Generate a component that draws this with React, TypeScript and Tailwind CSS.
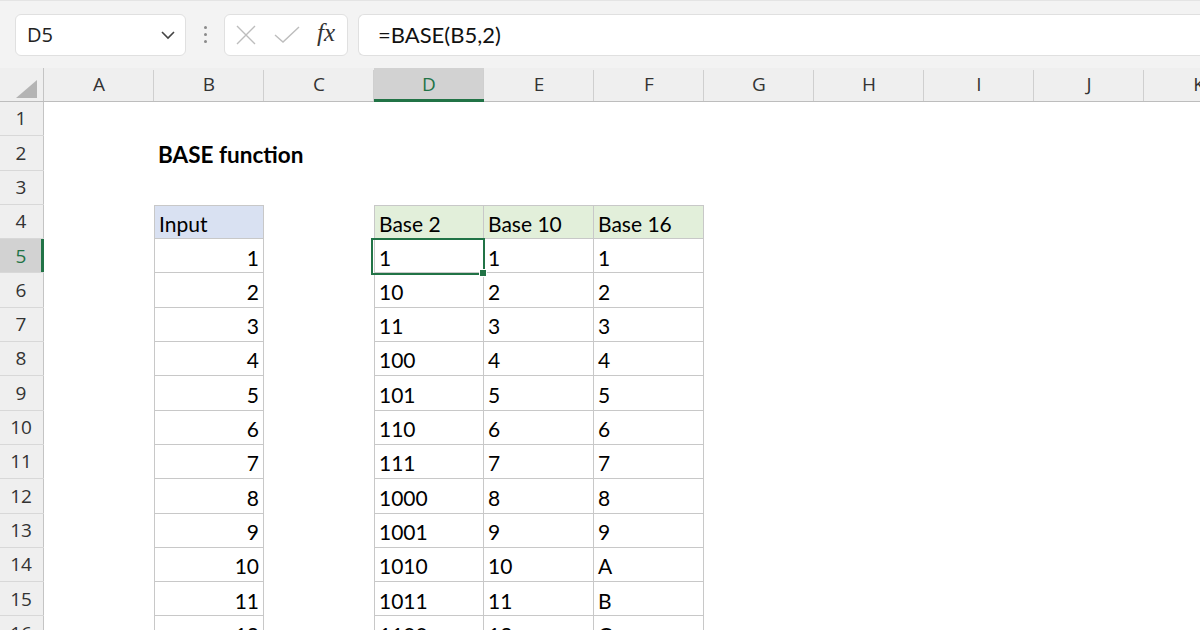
import React from "react";

const cols = ["A", "B", "C", "D", "E", "F", "G", "H", "I", "J", "K"];
const base2 = ["1", "10", "11", "100", "101", "110", "111", "1000", "1001", "1010", "1011", "1100"];
const base16 = ["1", "2", "3", "4", "5", "6", "7", "8", "9", "A", "B", "C"];

const cellFont = { fontFamily: "Lato, 'Open Sans', sans-serif" };
const cellBase = "w-[110px] shrink-0 h-full flex items-center px-[4px] pt-[3px] text-[21px] text-black ";

function RowHeader({ n, selected }: { n: number; selected?: boolean }) {
  return (
    <div
      className={
        "w-[44px] shrink-0 h-full flex items-center justify-center border-b border-[#d8d8d8] text-[19px] relative " +
        (selected ? "bg-[#d2d2d2] text-[#217346]" : "bg-[#efefef] text-[#333]")
      }
      style={{ fontFamily: "'Open Sans', 'Noto Sans', sans-serif" }}
    >
      <span className="-ml-[2px]">{n}</span>
      <div className={"absolute right-0 top-0 bottom-0 " + (selected ? "w-[3px] bg-[#217346]" : "w-[1px] bg-[#c4c4c4]")} />
    </div>
  );
}

export default function App() {
  const rows: React.ReactNode[] = [];
  for (let r = 1; r <= 16; r++) {
    const i = r - 5;
    let b: React.ReactNode = null;
    let d: React.ReactNode = null;
    let e: React.ReactNode = null;
    let f: React.ReactNode = null;
    let bordered = false;
    let bBg = "";
    let tBg = "";
    if (r === 4) {
      b = "Input";
      d = "Base 2";
      e = "Base 10";
      f = "Base 16";
      bordered = true;
      bBg = "bg-[#d9e1f2]";
      tBg = "bg-[#e2efda]";
    } else if (r >= 5) {
      b = String(i + 1);
      d = base2[i];
      e = String(i + 1);
      f = base16[i];
      bordered = true;
    }
    const top = r === 4 ? "border-t " : "";
    rows.push(
      <div key={r} className="flex h-[34.3px]">
        <RowHeader n={r} selected={r === 5} />
        <div className={cellBase} style={cellFont} />
        {r === 2 ? (
          <div
            className="w-[110px] shrink-0 h-full flex items-center px-[4px] pt-[3px] text-[22.5px] font-bold text-black whitespace-nowrap"
            style={cellFont}
          >
            BASE function
          </div>
        ) : (
          <div
            className={
              cellBase +
              (bordered ? "border-l border-r border-b border-[#c8c8c8] " : "") +
              top +
              (r === 4 ? "justify-start " : "justify-end ") +
              bBg
            }
            style={cellFont}
          >
            {b}
          </div>
        )}
        <div className={cellBase} style={cellFont} />
        <div
          className={cellBase + (bordered ? "border-l border-r border-b border-[#c8c8c8] " : "") + top + tBg}
          style={cellFont}
        >
          {d}
        </div>
        <div className={cellBase + (bordered ? "border-r border-b border-[#c8c8c8] " : "") + top + tBg} style={cellFont}>
          {e}
        </div>
        <div className={cellBase + (bordered ? "border-r border-b border-[#c8c8c8] " : "") + top + tBg} style={cellFont}>
          {f}
        </div>
      </div>
    );
  }

  return (
    <div
      className="w-[1200px] h-[630px] overflow-hidden bg-white relative"
      style={{ fontFamily: "'Open Sans', 'Noto Sans', sans-serif" }}
    >
      {/* toolbar */}
      <div className="h-[68px] bg-[#f3f3f3] flex items-center border-t border-[#e4e4e4]">
        <div className="ml-[15px] w-[171px] h-[42px] bg-white rounded-[6px] border border-[#e0e0e0] flex items-center justify-between pl-[11px] pr-[9px]">
          <span className="text-[20px] text-[#222]">D5</span>
          <svg width="16" height="10" viewBox="0 0 16 10">
            <path d="M2 2 L8 8 L14 2" fill="none" stroke="#444" strokeWidth="1.6" />
          </svg>
        </div>
        <div className="w-[38px] flex flex-col items-center gap-[4px]">
          <div className="w-[3px] h-[3px] rounded-full bg-[#8a8a8a]" />
          <div className="w-[3px] h-[3px] rounded-full bg-[#8a8a8a]" />
          <div className="w-[3px] h-[3px] rounded-full bg-[#8a8a8a]" />
        </div>
        <div className="w-[124px] h-[42px] bg-white rounded-[6px] border border-[#e0e0e0] flex items-center pl-[10px]">
          <svg width="22" height="22" viewBox="0 0 22 22">
            <path d="M2 2 L20 20 M20 2 L2 20" stroke="#bdbdbd" strokeWidth="1.4" fill="none" />
          </svg>
          <svg width="28" height="22" viewBox="0 0 28 22" className="ml-[16px]">
            <path d="M2 11 L10 18 L26 3" stroke="#bdbdbd" strokeWidth="1.4" fill="none" />
          </svg>
          <span
            className="ml-[16px] text-[25px] italic text-[#333] leading-none -mt-[4px]"
            style={{ fontFamily: "'Liberation Serif', 'DejaVu Serif', serif" }}
          >
            fx
          </span>
        </div>
        <div className="ml-[10px] flex-1 h-[42px] bg-white rounded-l-[6px] border border-r-0 border-[#e0e0e0] flex items-center pl-[19px]">
          <span className="text-[22px] text-[#111]" style={cellFont}>
            =BASE(B5,2)
          </span>
        </div>
      </div>
      {/* column headers */}
      <div className="flex h-[34px] bg-[#efefef] border-b border-[#bdbdbd]">
        <div className="w-[44px] shrink-0 h-full relative border-r border-[#c4c4c4]">
          <svg width="22" height="18" viewBox="0 0 22 18" className="absolute left-[16px] top-[12px]">
            <path d="M21 0 L21 18 L0 18 Z" fill="#b4b4b4" />
          </svg>
        </div>
        {cols.map((c) => (
          <div
            key={c}
            className={
              "w-[110px] shrink-0 h-full flex items-center justify-center text-[19px] relative " +
              (c === "D" ? "bg-[#d2d2d2] text-[#217346]" : "text-[#333]")
            }
          >
            <span>{c}</span>
            <div className="absolute right-0 top-[2px] bottom-0 w-[1px] bg-[#cfcfcf]" />
            {c === "D" && <div className="absolute left-0 right-0 bottom-[-1px] h-[3px] bg-[#217346]" />}
          </div>
        ))}
      </div>
      {/* rows */}
      <div className="flex flex-col">{rows}</div>
      {/* active cell */}
      <div className="absolute left-[371px] top-[237.5px] w-[114px] h-[37px] border-[2px] border-[#217346] pointer-events-none" />
      <div className="absolute left-[479px] top-[268.5px] w-[8px] h-[8px] bg-[#217346] border border-white pointer-events-none" />
    </div>
  );
}
